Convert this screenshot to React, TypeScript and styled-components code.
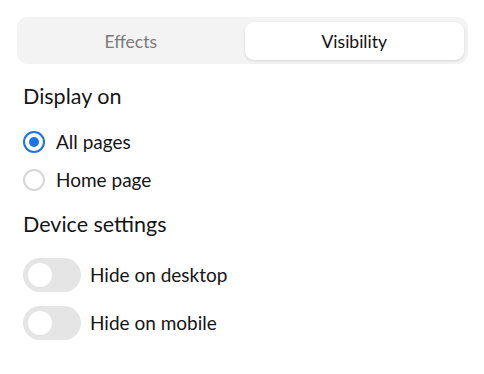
import React, { useState } from "react"
import styled, { createGlobalStyle } from "styled-components"

const GlobalStyle = createGlobalStyle`
  body {
    margin: 0;
    background: #fff;
    font-family: Lato, "Open Sans", sans-serif;
    color: #151515;
  }
`

type Tab = "effects" | "visibility"

export default function App() {
  const [tab, setTab] = useState<Tab>("visibility")
  const [page, setPage] = useState("all")
  const [hideDesktop, setHideDesktop] = useState(false)
  const [hideMobile, setHideMobile] = useState(false)

  return (
    <>
      <GlobalStyle />
      <S.Panel>
        <S.Tabs>
          <S.TabButton active={tab === "effects"} onClick={() => setTab("effects")}>Effects</S.TabButton>
          <S.TabButton active={tab === "visibility"} onClick={() => setTab("visibility")}>Visibility</S.TabButton>
        </S.Tabs>
        <S.Content>
          <S.Heading>Display on</S.Heading>
          <S.Group>
            <S.Row gap={11} onClick={() => setPage("all")}>
              <S.Radio checked={page === "all"} />
              <S.Label>All pages</S.Label>
            </S.Row>
            <S.Row gap={11} onClick={() => setPage("home")}>
              <S.Radio checked={page === "home"} />
              <S.Label>Home page</S.Label>
            </S.Row>
          </S.Group>
          <S.Heading>Device settings</S.Heading>
          <S.Group>
            <S.Row gap={9} onClick={() => setHideDesktop(!hideDesktop)}>
              <S.Switch on={hideDesktop} />
              <S.Label>Hide on desktop</S.Label>
            </S.Row>
            <S.Row gap={9} onClick={() => setHideMobile(!hideMobile)}>
              <S.Switch on={hideMobile} />
              <S.Label>Hide on mobile</S.Label>
            </S.Row>
          </S.Group>
        </S.Content>
      </S.Panel>
    </>
  )
}

var S = {
  Panel: styled.div`
    padding: 17px 16px 0 17px;
  `,
  Tabs: styled.div`
    display: grid;
    grid-template-columns: 1fr 1fr;
    gap: 4px;
    padding: 5px 4px 4px 4px;
    background: #f3f3f3;
    border-radius: 11px;
  `,
  TabButton: styled.button<{ active: boolean }>`
    height: 38px;
    border: none;
    border-radius: 9px;
    font-family: Lato, sans-serif;
    font-size: 17.5px;
    cursor: pointer;
    background: ${({ active }) => (active ? "#fff" : "transparent")};
    color: ${({ active }) => (active ? "#111" : "#7a7a7a")};
    box-shadow: ${({ active }) => (active ? "0 1px 3px rgba(0,0,0,0.12)" : "none")};
  `,
  Content: styled.div`
    padding: 19px 6px 0 6px;
    display: flex;
    flex-direction: column;
  `,
  Heading: styled.div`
    font-size: 21.5px;
    line-height: 26px;
    margin-bottom: 21px;
  `,
  Group: styled.div`
    display: flex;
    flex-direction: column;
    gap: 14px;
    margin-bottom: 19px;
  `,
  Row: styled.div<{ gap: number }>`
    display: flex;
    align-items: center;
    gap: ${({ gap }) => gap}px;
    cursor: pointer;
  `,
  Label: styled.span`
    font-size: 19px;
    line-height: 24px;
  `,
  Radio: styled.span<{ checked: boolean }>`
    box-sizing: border-box;
    width: 22px;
    height: 22px;
    border-radius: 50%;
    border: 2px solid ${({ checked }) => (checked ? "#1a73e8" : "#d6d6d6")};
    display: flex;
    align-items: center;
    justify-content: center;
    &::after {
      content: "";
      width: 10px;
      height: 10px;
      border-radius: 50%;
      background: ${({ checked }) => (checked ? "#1a73e8" : "transparent")};
    }
  `,
  Switch: styled.span<{ on: boolean }>`
    position: relative;
    box-sizing: border-box;
    width: 58px;
    height: 34px;
    border-radius: 17px;
    padding: 5px;
    background: ${({ on }) => (on ? "#1a73e8" : "#e5e5e5")};
    display: flex;
    justify-content: ${({ on }) => (on ? "flex-end" : "flex-start")};
    &::after {
      content: "";
      width: 24px;
      height: 24px;
      border-radius: 50%;
      background: #fff;
    }
  `,
}
